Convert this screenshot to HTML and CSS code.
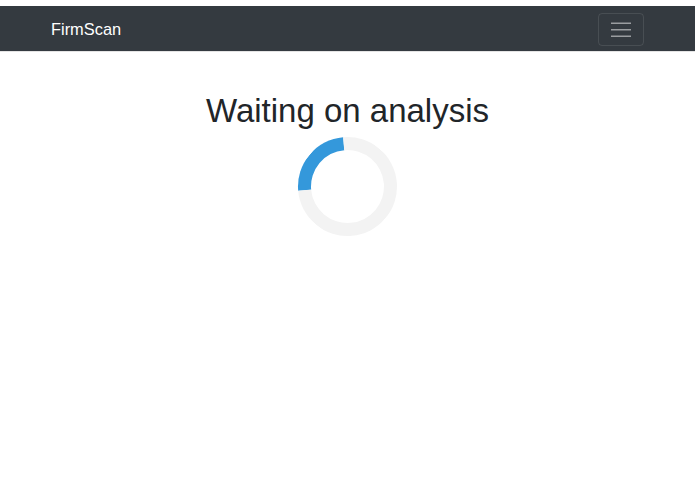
FILE: index.html
```html
<!DOCTYPE html>
<html lang="en">
<head>
<meta charset="utf-8">
<title>FirmScan</title>
<link rel="stylesheet" href="styles.css">
</head>
<body>
<nav class="navbar">
  <a class="brand" href="#">FirmScan</a>
  <button class="toggler" type="button" aria-label="Toggle navigation">
    <svg width="20" height="16" viewBox="0 0 20 16" aria-hidden="true">
      <path d="M0 2.3h20M0 8.7h20M0 15.3h20" stroke="rgba(255,255,255,0.5)" stroke-width="1.6" fill="none"/>
    </svg>
  </button>
</nav>
<main class="content">
  <h1 class="title">Waiting on analysis</h1>
  <div class="loader"></div>
</main>
</body>
</html>
```

FILE: styles.css
```css
html, body {
  margin: 0;
  padding: 0;
  background: #fff;
}
body {
  padding-top: 6px;
  font-family: "Liberation Sans", Arial, sans-serif;
  color: #212529;
}
.navbar {
  height: 46px;
  box-sizing: border-box;
  background: #343a40;
  display: flex;
  align-items: center;
  justify-content: space-between;
  padding: 0 51px;
  border-bottom: 1px solid #e4e4e4;
}
.brand {
  color: #fff;
  text-decoration: none;
  font-size: 16.4px;
  line-height: 1;
  margin-top: 1px;
}
.toggler {
  width: 46px;
  height: 33px;
  box-sizing: border-box;
  background: transparent;
  border: 1px solid rgba(255,255,255,0.1);
  border-radius: 4px;
  padding: 0;
  display: flex;
  align-items: center;
  justify-content: center;
  margin-top: 1px;
}
.toggler svg {
  display: block;
}
.content {
  display: flex;
  flex-direction: column;
  align-items: center;
}
.title {
  margin: 39px 0 6px;
  font-size: 33px;
  font-weight: 400;
  line-height: 1.2;
}
.loader {
  width: 99px;
  height: 99px;
  box-sizing: border-box;
  border: 13px solid #f3f3f3;
  border-top-color: #3498db;
  border-radius: 50%;
  transform: rotate(-50deg);
}
```
